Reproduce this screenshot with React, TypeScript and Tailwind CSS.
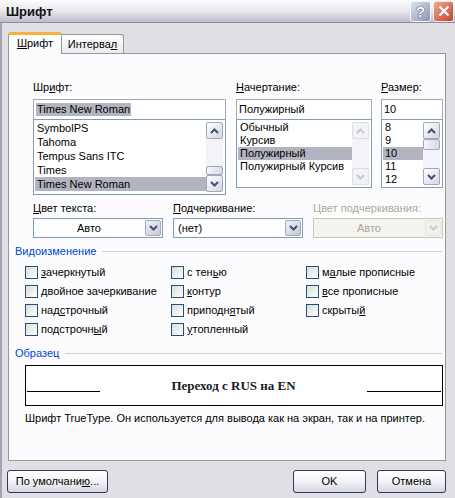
import React from 'react';

// underlined access key
function U({ children }: { children: React.ReactNode }) {
  return <span className="underline underline-offset-[1px]">{children}</span>;
}

function Chevron({ up, disabled }: { up?: boolean; disabled?: boolean }) {
  return (
    <svg width="9" height="6" viewBox="0 0 9 6">
      <path
        d={up ? 'M1 5 L4.5 1.5 L8 5' : 'M1 1 L4.5 4.5 L8 1'}
        fill="none"
        stroke={disabled ? '#c6c9d6' : '#3e4f78'}
        strokeWidth="2"
      />
    </svg>
  );
}

function ScrollBtn({ up, disabled }: { up?: boolean; disabled?: boolean }) {
  return (
    <div
      className={`h-[17px] w-[17px] shrink-0 rounded-[2px] border flex items-center justify-center ${
        disabled
          ? 'border-[#dcdde6] bg-[#f3f3f7]'
          : 'border-[#a3a7bb] bg-gradient-to-br from-[#ffffff] to-[#d4d6e2]'
      }`}
    >
      <Chevron up={up} disabled={disabled} />
    </div>
  );
}

interface ListProps {
  items: string[];
  selected: number;
  rowH: string;
  thumbTop?: string;
  thumbH?: string;
  disabled?: boolean;
}

function ListBox({ items, selected, rowH, thumbTop, thumbH, disabled }: ListProps) {
  return (
    <div className="flex border border-[#7f9db9] bg-white p-px">
      <div className="flex-1 flex flex-col">
        {items.map((it, i) => (
          <div
            key={it}
            className={`${rowH} flex items-center pl-[2px] whitespace-nowrap ${i === selected ? 'bg-[#b2b4bf]' : ''}`}
          >
            {it}
          </div>
        ))}
      </div>
      <div className="w-[17px] flex flex-col bg-[#f4f4f8] my-px mr-px">
        <ScrollBtn up disabled={disabled} />
        <div className="flex-1">
          {!disabled && (
            <div className={`${thumbTop} ${thumbH} rounded-[2px] border border-[#a3a7bb] bg-gradient-to-r from-[#f6f6fa] to-[#d6d8e4]`} />
          )}
        </div>
        <ScrollBtn disabled={disabled} />
      </div>
    </div>
  );
}

function Combo({ text, center, disabled }: { text: string; center?: boolean; disabled?: boolean }) {
  return (
    <div
      className={`h-[20px] flex items-stretch border ${
        disabled ? 'border-[#c9c7ba] bg-[#f4f3ee] text-[#aca899]' : 'border-[#7f9db9] bg-white'
      }`}
    >
      <div className={`flex-1 flex items-center ${center ? 'justify-center' : 'pl-[4px]'}`}>{text}</div>
      <div
        className={`w-[16px] m-px rounded-[2px] border flex items-center justify-center ${
          disabled
            ? 'border-[#e6e5de] bg-[#f2f1ec]'
            : 'border-[#a3a7bb] bg-gradient-to-br from-[#f0f0f6] to-[#c6c9d8]'
        }`}
      >
        <Chevron disabled={disabled} />
      </div>
    </div>
  );
}

function Check({ children }: { children: React.ReactNode }) {
  return (
    <div className="h-[19px] flex items-center">
      <div className="w-[13px] h-[13px] border border-[#1c5180] bg-gradient-to-br from-[#dcdcd7] to-[#ffffff] mr-[3px]" />
      <span>{children}</span>
    </div>
  );
}

function GroupLabel({ children }: { children: React.ReactNode }) {
  return (
    <div className="flex items-center h-[13px] pl-[6px] pr-[2px]">
      <span className="text-[#0046d5] pr-[6px]">{children}</span>
      <div className="flex-1 h-px bg-[#d0d0d8] mr-[1px]" />
    </div>
  );
}

function Button({ children, w }: { children: React.ReactNode; w: string }) {
  return (
    <div
      className={`${w} h-[23px] rounded-[3px] border border-[#2c3a5e] bg-gradient-to-b from-[#ffffff] via-[#f3f3f6] to-[#d6d6e0] flex items-center justify-center`}
    >
      {children}
    </div>
  );
}

export default function App() {
  return (
    <div className="w-[455px] h-[498px] bg-[#e0dfe3] overflow-hidden text-[11px] text-black font-['Liberation_Sans',Arial,sans-serif] leading-[13px] flex flex-col">
      {/* Title bar */}
      <div className="h-[23px] shrink-0 flex items-center justify-between bg-gradient-to-b from-[#fdfdfe] via-[#e8e8ee] to-[#bdbdca] border-b border-[#8e8e9e]">
        <span className="pl-[6px] text-[13px] font-bold text-[#111]">Шрифт</span>
        <div className="flex gap-[2px] pr-[1px]">
          <div className="w-[21px] h-[21px] rounded-[3px] border border-[#f4f5fa] bg-gradient-to-br from-[#dfe3f1] to-[#8b93b6] flex items-center justify-center">
            <span className="text-[15px] font-bold text-white [text-shadow:0_0_1px_#3a4260,0_0_1px_#3a4260]">?</span>
          </div>
          <div className="w-[21px] h-[21px] rounded-[3px] border border-[#f6e8e4] bg-gradient-to-br from-[#eca593] to-[#c2402e] flex items-center justify-center">
            <svg width="12" height="12" viewBox="0 0 12 12">
              <path d="M1.5 1.5 L10.5 10.5 M10.5 1.5 L1.5 10.5" stroke="white" strokeWidth="2.2" />
            </svg>
          </div>
        </div>
      </div>

      <div className="flex-1 flex flex-col border-l-[2px] border-[#a3a3b4] pl-[6px] pr-[9px]">
        {/* Tabs */}
        <div className="h-[30px] flex items-end pt-[8px]">
          <div className="w-[54px] h-[22px] -mb-px z-10 border-x border-[#919b9c] border-t-[3px] border-t-[#f2b43c] rounded-t-[3px] bg-[#fcfcfe] flex items-center justify-center pb-[2px]">
            <span>
              <U>Ш</U>рифт
            </span>
          </div>
          <div className="w-[62px] h-[19px] border-t border-r border-[#919b9c] rounded-tr-[3px] bg-gradient-to-b from-[#ffffff] to-[#eae9ee] flex items-center justify-center">
            <span>
              Интерва<U>л</U>
            </span>
          </div>
        </div>

        {/* Panel */}
        <div className="h-[408px] border border-[#919b9c] bg-[#fcfcfe] flex flex-col pt-[27px]">
          <div className="flex pl-[24px] gap-[10px]">
            <div className="w-[193px] flex flex-col">
              <div className="mb-[5px]">
                Шр<U>и</U>фт:
              </div>
              <div className="h-[20px] border border-[#a5acb5] border-b-0 bg-white flex items-center px-[2px]">
                <span className="bg-[#b2b4bf] px-[1px]">Times New Roman</span>
              </div>
              <ListBox
                items={['SymbolPS', 'Tahoma', 'Tempus Sans ITC', 'Times', 'Times New Roman']}
                selected={4}
                rowH="h-[14px]"
                thumbTop="mt-[27px]"
                thumbH="h-[9px]"
              />
            </div>
            <div className="w-[136px] flex flex-col">
              <div className="mb-[5px]">
                <U>Н</U>ачертание:
              </div>
              <div className="h-[20px] border border-[#a5acb5] border-b-0 bg-white flex items-center px-[2px]">
                Полужирный
              </div>
              <ListBox
                items={['Обычный', 'Курсив', 'Полужирный', 'Полужирный Курсив', '']}
                selected={2}
                rowH="h-[13px]"
                disabled
              />
            </div>
            <div className="w-[62px] flex flex-col ml-[-1px]">
              <div className="mb-[5px]">
                <U>Р</U>азмер:
              </div>
              <div className="h-[20px] border border-[#a5acb5] border-b-0 bg-white flex items-center px-[2px]">
                10
              </div>
              <ListBox
                items={['8', '9', '10', '11', '12']}
                selected={2}
                rowH="h-[13px]"
                thumbTop="mt-0"
                thumbH="h-[11px]"
              />
            </div>
          </div>

          {/* Colour / underline */}
          <div className="flex pl-[24px] gap-[10px] mt-[7px]">
            <div className="w-[130px] flex flex-col">
              <div className="mb-[3px]">
                <U>Ц</U>вет текста:
              </div>
              <Combo text="Авто" center />
            </div>
            <div className="w-[130px] flex flex-col">
              <div className="mb-[3px]">
                <U>П</U>одчеркивание:
              </div>
              <Combo text="(нет)" />
            </div>
            <div className="w-[130px] flex flex-col">
              <div className="mb-[3px] text-[#aca899]">Цвет подчеркивания:</div>
              <Combo text="Авто" center disabled />
            </div>
          </div>

          {/* Effects */}
          <div className="mt-[7px]">
            <GroupLabel>Видоизменение</GroupLabel>
          </div>
          <div className="grid grid-cols-[146px_135px_1fr] pl-[16px] mt-[5px]">
            <div className="flex flex-col">
              <Check>
                <U>з</U>ачеркнутый
              </Check>
              <Check>
                <U>д</U>войное зачеркивание
              </Check>
              <Check>
                над<U>с</U>трочный
              </Check>
              <Check>
                подстрочн<U>ы</U>й
              </Check>
            </div>
            <div className="flex flex-col">
              <Check>
                с тен<U>ь</U>ю
              </Check>
              <Check>
                <U>к</U>онтур
              </Check>
              <Check>
                приподн<U>я</U>тый
              </Check>
              <Check>
                <U>у</U>топленный
              </Check>
            </div>
            <div className="flex flex-col">
              <Check>
                м<U>а</U>лые прописные
              </Check>
              <Check>
                <U>в</U>се прописные
              </Check>
              <Check>
                скрыты<U>й</U>
              </Check>
            </div>
          </div>

          {/* Sample */}
          <div className="mt-[8px]">
            <GroupLabel>Образец</GroupLabel>
          </div>
          <div className="ml-[16px] mr-[2px] mt-[5px] h-[41px] border border-black bg-white flex items-center px-[1px]">
            <div className="w-[73px] h-px bg-black mt-[12px]" />
            <div className="flex-1 text-center font-['Liberation_Serif',serif] font-bold text-[13px] text-[#1a1a2a]">
              Переход с RUS на EN
            </div>
            <div className="w-[74px] h-px bg-black mt-[12px]" />
          </div>
          <div className="ml-[16px] mt-[6px]">
            Шрифт TrueType. Он используется для вывода как на экран, так и на принтер.
          </div>
        </div>

        {/* Buttons */}
        <div className="flex items-center mt-[9px] -ml-[1px]">
          <Button w="w-[101px]">
            <span>
              По умолчани<U>ю</U>...
            </span>
          </Button>
          <div className="flex-1" />
          <Button w="w-[73px]">OK</Button>
          <div className="w-[11px]" />
          <Button w="w-[69px]">Отмена</Button>
        </div>
      </div>
    </div>
  );
}
